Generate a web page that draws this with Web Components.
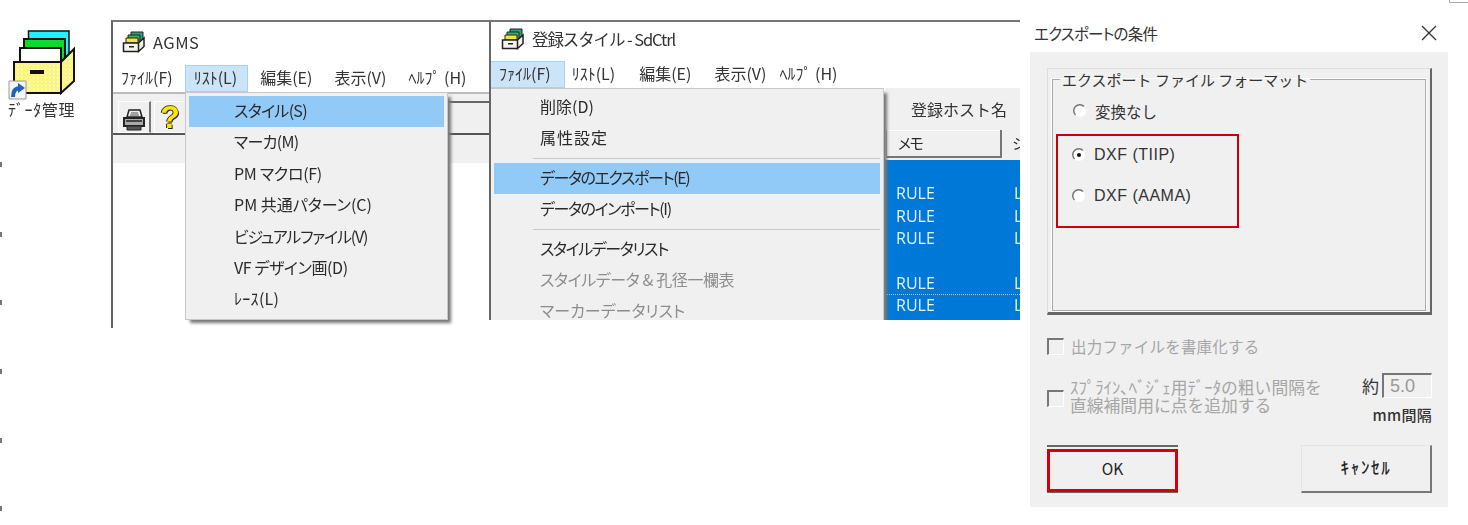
<!DOCTYPE html>
<html lang="ja">
<head>
<meta charset="utf-8">
<title>AGMS</title>
<style>
	html, body { margin: 0; background: #fff; }
	body { font-family: "Noto Sans CJK JP", "Noto Sans", sans-serif; color: #2a2a2a; overflow: hidden; }
</style>
</head>
<body>
<desk-top>
	<desktop-icon style="left:8px;top:28px">ﾃﾞｰﾀ管理</desktop-icon>

	<app-window title="AGMS" style="left:111px;top:20px;width:379px;height:308px;--pad:9px;--head:43px;--lift:4px;--track:.5px">
		<menu-item slot="menu" style="margin-left:-1px">ﾌｧｲﾙ(F)</menu-item>
		<menu-item slot="menu" open style="margin-left:-1px;padding-right:10px">ﾘｽﾄ(L)</menu-item>
		<menu-item slot="menu" style="margin-left:-1px">編集(E)</menu-item>
		<menu-item slot="menu">表示(V)</menu-item>
		<menu-item slot="menu">ﾍﾙﾌﾟ (H)</menu-item>
		<tool-bar>
			<tool-button><print-icon></print-icon></tool-button>
			<tool-button>?</tool-button>
		</tool-bar>
		<list-pane></list-pane>
		<drop-menu style="left:72px;top:70px;width:263px;height:228px;--inset:45px;--row:31.400px">
			<menu-entry active style="letter-spacing:-.7px">スタイル(S)</menu-entry>
			<menu-entry style="letter-spacing:-.7px">マーカ(M)</menu-entry>
			<menu-entry style="letter-spacing:-.3px">PM マクロ(F)</menu-entry>
			<menu-entry>PM 共通パターン(C)</menu-entry>
			<menu-entry style="letter-spacing:-1.200px">ビジュアルファイル(V)</menu-entry>
			<menu-entry style="letter-spacing:-.4px">VF デザイン画(D)</menu-entry>
			<menu-entry style="letter-spacing:.3px">ﾚｰｽ(L)</menu-entry>
		</drop-menu>
	</app-window>

	<app-window title="登録スタイル - SdCtrl" style="left:489px;top:20px;width:531px;height:300px;--pad:10px;--head:39px;--lift:6px;--track:-1.100px">
		<menu-item slot="menu" open style="margin-left:-1px;padding-right:13px">ﾌｧｲﾙ(F)</menu-item>
		<menu-item slot="menu" style="margin-left:-6px">ﾘｽﾄ(L)</menu-item>
		<menu-item slot="menu" style="margin-left:2px">編集(E)</menu-item>
		<menu-item slot="menu" style="margin-left:1px">表示(V)</menu-item>
		<menu-item slot="menu" style="margin-left:-9px">ﾍﾙﾌﾟ (H)</menu-item>
		<style-table></style-table>
		<drop-menu style="left:-1px;top:66px;width:394px;height:240px;--inset:46px;--row:31px" open-end>
			<menu-entry>削除(D)</menu-entry>
			<menu-entry style="letter-spacing:1px">属性設定</menu-entry>
			<menu-sep></menu-sep>
			<menu-entry active style="letter-spacing:-1.400px">データのエクスポート(E)</menu-entry>
			<menu-entry style="letter-spacing:-1.400px">データのインポート(I)</menu-entry>
			<menu-sep></menu-sep>
			<menu-entry style="letter-spacing:-1.400px">スタイルデータリスト</menu-entry>
			<menu-entry disabled style="letter-spacing:-.4px">スタイルデータ &amp; 孔径一欄表</menu-entry>
			<menu-entry disabled>マーカーデータリスト</menu-entry>
		</drop-menu>
	</app-window>

	<export-dialog style="left:1030px;top:20px"></export-dialog>

	<edge-tick style="left:0;top:162px"></edge-tick>
	<edge-tick style="left:0;top:232px"></edge-tick>
	<edge-tick style="left:0;top:300px"></edge-tick>
	<edge-tick style="left:0;top:369px"></edge-tick>
	<edge-tick style="left:0;top:438px"></edge-tick>
	<edge-tick style="left:0;top:506px"></edge-tick>
</desk-top>

<script>
// Общая часть: теневой корень из строки разметки
class ShadowBox extends HTMLElement {
	constructor(html) {
		super();
		this.attachShadow({ mode: 'open' });
		let t = document.createElement('template');
		t.innerHTML = html;
		this.shadowRoot.append(t.content.cloneNode(true));
	}
}

const CABINET = `
	<svg viewBox="0 0 24 22" width="24" height="22" style="display:block">
		<path d="M9 1h12v9H9z" fill="#2f9c80" stroke="#222"/>
		<path d="M6 4h12v8H6z" fill="#39b54a" stroke="#222"/>
		<path d="M4 7h12v5H4z" fill="#f2e24a" stroke="#222"/>
		<path d="M1.500 12h15v8.500h-15zM16.500 12l5.500-5v8.500l-5.500 5z" fill="#f4f4ee" stroke="#222" stroke-width="1.500"/>
		<path d="M7 15h5v1.500H7z" fill="#222"/>
	</svg>`;

customElements.define('desk-top', class extends ShadowBox {
	constructor() {
		super(`<style>
			:host { display: block; position: relative; width: 1468px; height: 525px; overflow: hidden; filter: blur(.35px); }
			.corner { position: absolute; left: 1449px; top: -2px; width: 30px; height: 3px; border: 1px solid #aaa; }
		</style><slot></slot><div class="corner"></div>`);
	}
});

customElements.define('edge-tick', class extends ShadowBox {
	constructor() {
		super(`<style>:host { position: absolute; width: 2px; height: 5px; background: #777; }</style>`);
	}
});

customElements.define('desktop-icon', class extends ShadowBox {
	constructor() {
		super(`<style>
			:host { position: absolute; display: flex; flex-direction: column; align-items: flex-start; width: 72px; font-size: 16px; line-height: 20px; color: #333; }
			svg { display: block; }
			.name { margin-top: -2px; white-space: nowrap; letter-spacing: .6px; }
		</style>
		<svg viewBox="8 28 70 73" width="70" height="73">
			<defs><pattern id="dots" width="4" height="4" patternUnits="userSpaceOnUse">
				<rect width="4" height="4" fill="#fbf582"/><rect x="1" y="1" width="1.300" height="1.300" fill="#fff"/>
			</pattern></defs>
			<path d="M28.500 31h40.500v24l-4 6H28.500z" fill="#22f2f8" stroke="#111" stroke-width="1.500"/>
			<path d="M24 39h41v23H24z" fill="#0ddb2a" stroke="#111" stroke-width="2"/>
			<path d="M20 48h41v15H20z" fill="#fff" stroke="#111" stroke-width="2"/>
			<path d="M61 62l13-13v32l-13 12z" fill="url(#dots)" stroke="#111" stroke-width="2"/>
			<path d="M14 62h47v31H14z" fill="url(#dots)" stroke="#111" stroke-width="2"/>
			<path d="M30 70h14v4H30z" fill="#111"/>
			<path d="M9 81h17v18H9z" fill="#f4f4f4" stroke="#999"/>
			<path d="M13 97c0-6 2-9 7-9" fill="none" stroke="#1e63b8" stroke-width="4"/>
			<path d="M18 83l7 5-7 5z" fill="#1e63b8"/>
		</svg>
		<div class="name"><slot></slot></div>`);
	}
});

customElements.define('app-window', class extends ShadowBox {
	constructor() {
		super(`<style>
			:host { position: absolute; display: block; box-sizing: border-box; border-top: 2px solid #777; border-left: 2px solid #666; background: #fff; overflow: hidden; font-size: 16px; }
			.title { display: flex; align-items: center; gap: 7px; box-sizing: border-box; padding: 0 0 var(--lift) var(--pad); height: var(--head); font-size: 16.500px; letter-spacing: var(--track); color: #333; white-space: nowrap; }
			.menu { display: flex; align-items: center; height: 27px; gap: 4px; }
		</style>
		<div class="title"><span id="ico"></span><span id="cap"></span></div>
		<div class="menu"><slot name="menu"></slot></div>
		<div><slot></slot></div>`);
	}
	connectedCallback() {
		this.shadowRoot.querySelector('#cap').textContent = this.getAttribute('title');
		this.shadowRoot.querySelector('#ico').innerHTML = CABINET;
		this.removeAttribute('title');
	}
});

customElements.define('menu-item', class extends ShadowBox {
	constructor() {
		super(`<style>
			:host { display: block; box-sizing: border-box; height: 27px; line-height: 23px; padding: 0 8px; white-space: nowrap; font-size: 16px; color: #333; border: 1px solid transparent; }
			:host([open]) { background: #cce4f7; border-color: #a8d2f2; }
		</style><slot></slot>`);
	}
});

customElements.define('tool-bar', class extends ShadowBox {
	constructor() {
		super(`<style>
			:host { display: flex; gap: 3px; box-sizing: border-box; height: 43px; padding: 7px 0 0 5px; border-top: 2px solid #bbb; border-bottom: 2px solid #555;
				background: linear-gradient(#666, #666) no-repeat 80px 7px / 100% 2px, #f0f0f0; }
		</style><slot></slot>`);
	}
});

customElements.define('tool-button', class extends ShadowBox {
	constructor() {
		super(`<style>
			:host { display: flex; align-items: center; justify-content: center; box-sizing: border-box; width: 33px; height: 32px; background: #f0f0f0; border: 1px solid #fff; border-right: 2px solid #777; font: 700 32px/1 "Liberation Sans", sans-serif; color: #ffe600; text-shadow: 1px 1px 0 #222, -1px 0 0 #222, 0 -1px 0 #555; }
		</style><slot></slot>`);
	}
});

customElements.define('print-icon', class extends ShadowBox {
	constructor() {
		super(`<style>:host { display: block; width: 24px; height: 24px; }</style>
		<svg viewBox="0 0 24 24" width="24" height="24">
			<path d="M7 2h11l2 7H5z" fill="#eee" stroke="#222" stroke-width="1.500"/>
			<path d="M2 10h20v8H2z" fill="#aaa" stroke="#222" stroke-width="2"/>
			<path d="M4 13h16" stroke="#444" stroke-width="2"/>
			<path d="M5 18h14v4H5z" fill="#555" stroke="#222"/>
			<path d="M9 5h7M8 7h9" stroke="#555"/>
		</svg>`);
	}
});

customElements.define('list-pane', class extends ShadowBox {
	constructor() {
		super(`<style>
			:host { display: block; height: 193px; background: linear-gradient(#f0f0f0 28px, #fff 28px); }
		</style>`);
	}
});

customElements.define('drop-menu', class extends ShadowBox {
	constructor() {
		super(`<style>
			:host { position: absolute; display: block; box-sizing: border-box; padding: 3px; background: #f0f0f0; border: 1px solid #c8c8c8; box-shadow: 4px 4px 3px -1px #777; overflow: hidden; font-size: 16px; }
			:host([open-end]) { border-bottom: 0; }
		</style><slot></slot>`);
	}
});

customElements.define('menu-entry', class extends ShadowBox {
	constructor() {
		super(`<style>
			:host { display: block; height: var(--row); line-height: calc(var(--row) - 2px); padding-left: var(--inset); white-space: nowrap; color: #2a2a2a; font-feature-settings: "palt"; }
			:host([active]) { background: #91c9f7; }
			:host([disabled]) { color: #8d8d8d; }
		</style><slot></slot>`);
	}
});

customElements.define('menu-sep', class extends ShadowBox {
	constructor() {
		super(`<style>
			:host { display: flex; align-items: center; height: 9px; margin-left: 39px; }
			i { display: block; flex: 1; height: 1px; background: #c8c8c8; }
		</style><i></i>`);
	}
});

customElements.define('style-table', class extends ShadowBox {
	constructor() {
		super(`<style>
			:host { display: block; margin-left: 394px; font-size: 16px; overflow: hidden; }
			.host { height: 40px; line-height: 42px; padding-left: 26px; background: #f0f0f0; color: #333; white-space: nowrap; }
			.head { display: grid; grid-template-columns: 116px 1fr; box-sizing: border-box; height: 32px; padding: 2px 0 3px 1px; line-height: 26px; background: #f0f0f0; font-size: 15px; letter-spacing: -3px; }
			.head span { padding-left: 10px; white-space: nowrap; }
			.head .memo { border-left: 1px solid #999; border-right: 2px solid #777; border-bottom: 2px solid #777; box-shadow: inset 0 1px 0 #fff; }
			.rows { height: 160px; background: #0078d7; color: #e6f2fc; font: 16px/22.400px "Open Sans", sans-serif; }
			.row { display: grid; grid-template-columns: 118px 1fr; box-sizing: border-box; height: 22.400px; padding-left: 11px; }
			.row.focus { border-top: 1px dotted #a9cde9; line-height: 21px; }
		</style>
		<div class="host">登録ホスト名</div>
		<div class="head"><span class="memo">メモ</span><span>シ</span></div>
		<div class="rows">
			<div class="row"></div>
			<div class="row"><span>RULE</span><span>L</span></div>
			<div class="row"><span>RULE</span><span>L</span></div>
			<div class="row"><span>RULE</span><span>L</span></div>
			<div class="row"></div>
			<div class="row"><span>RULE</span><span>L</span></div>
			<div class="row focus"><span>RULE</span><span>L</span></div>
		</div>`);
	}
});

customElements.define('radio-option', class extends ShadowBox {
	constructor() {
		super(`<style>
			:host { display: flex; align-items: center; gap: 8px; height: 38px; font-size: 15.500px; color: #333; white-space: nowrap; }
			:host([latin]) { font: 16px "Liberation Sans", sans-serif; letter-spacing: .5px; }
			svg { display: block; flex: none; }
			.dot { display: none; }
			:host([checked]) .dot { display: block; }
		</style>
		<svg viewBox="0 0 14 14" width="14" height="14">
			<circle cx="7" cy="7" r="6" fill="#fff"/>
			<path d="M11 2.500A6 6 0 0 0 2.500 11" fill="none" stroke="#777" stroke-width="1.500"/>
			<circle class="dot" cx="7" cy="7" r="2" fill="#111"/>
		</svg><span><slot></slot></span>`);
	}
});

customElements.define('check-box', class extends ShadowBox {
	constructor() {
		super(`<style>
			:host { display: block; box-sizing: border-box; flex: none; width: 17px; height: 17px; background: #f0f0f0; border-top: 2px solid #777; border-left: 2px solid #777; border-right: 1px solid #fff; border-bottom: 1px solid #fff; }
		</style>`);
	}
});

customElements.define('win-button', class extends ShadowBox {
	constructor() {
		super(`<style>
			:host { display: block; box-sizing: border-box; width: 131px; height: 48px; border: 1px solid #e4e4e4; border-right: 2px solid #777; border-bottom: 2px solid #777; font-size: 15.500px; color: #222; }
			:host([marked]) { border: 0; border-top: 2px solid #666; border-bottom: 1px solid #666; padding-top: 2px; }
			div { display: flex; align-items: center; justify-content: center; box-sizing: border-box; height: 100%; padding-bottom: 5px; }
			:host([marked]) div { border: 3px solid #d3000c; }
			:host([wide]) { font-size: 17px; font-weight: 500; letter-spacing: 1.700px; }
		</style><div><slot></slot></div>`);
	}
});

customElements.define('export-dialog', class extends ShadowBox {
	constructor() {
		super(`<style>
			:host { position: absolute; display: block; width: 418px; font-size: 15.500px; color: #333; }
			.title { display: flex; align-items: center; justify-content: space-between; box-sizing: border-box; height: 32px; padding: 0 11px 6px 4px; background: #fff; font-feature-settings: "palt"; letter-spacing: -.8px; }
			.body { display: flex; flex-direction: column; box-sizing: border-box; height: 455px; padding: 16px 16px 0 17px; background: #f0f0f0; }
			.group { flex: none; box-sizing: border-box; height: 247px; padding: 3px 4px 1px 4px; border: 1px solid #ddd; border-right: 2px solid #666; border-bottom: 3px solid #666; }
			fieldset { box-sizing: border-box; height: 100%; margin: 0; padding: 9px 0 0 3px; border: 1px solid #aaa; box-shadow: 0 0 0 1px #fff; }
			legend { margin-left: 4px; padding: 0 2px; line-height: 15px; font-size: 15px; white-space: pre; }
			.plain { padding-left: 17px; }
			.plain radio-option { height: 30px; }
			.mark { box-sizing: border-box; width: 183px; height: 94px; margin-top: 8px; padding-left: 14px; border: 2px solid #c8000a; }
			.mark radio-option + radio-option { margin-top: 3px; }
			.off { color: #a6a6a6; }
			.row1 { flex: none; display: flex; align-items: center; gap: 7px; margin-top: 23px; height: 17px; line-height: 13px; letter-spacing: .2px; }
			.row2 { flex: none; display: flex; margin-top: 18px; height: 54px; }
			.row2 .txt { display: flex; align-items: center; gap: 6px; flex: 1; height: 50px; }
			.small { position: relative; top: -2px; font-size: 16.800px; line-height: 18px; white-space: pre; }
			.side { display: flex; flex-direction: column; align-items: flex-end; font-size: 15px; }
			.val { display: flex; align-items: center; gap: 3px; font-size: 17px; }
			.input { box-sizing: border-box; width: 50px; height: 25px; line-height: 23px; padding-left: 6px; border-top: 2px solid #777; border-left: 2px solid #777; border-right: 1px solid #fff; border-bottom: 1px solid #fff; color: #999; font-family: "Liberation Sans", sans-serif; font-size: 18px; }
			.mm { margin-top: 7px; line-height: 20px; font-weight: 500; letter-spacing: .3px; }
			.btns { flex: none; display: flex; justify-content: space-between; margin-top: 18px; }
		</style>
		<div class="title"><span>エクスポートの条件</span>
			<svg viewBox="0 0 16 16" width="16" height="16"><path d="M1 1l14 14M15 1L1 15" stroke="#333" stroke-width="1.300" fill="none"/></svg>
		</div>
		<div class="body">
			<div class="group"><fieldset>
				<legend>エクスポート ファイル フォーマット</legend>
				<div class="plain"><radio-option>変換なし</radio-option></div>
				<div class="mark">
					<radio-option latin checked>DXF (TIIP)</radio-option>
					<radio-option latin>DXF (AAMA)</radio-option>
				</div>
			</fieldset></div>
			<div class="row1 off"><check-box></check-box><span>出力ファイルを書庫化する</span></div>
			<div class="row2">
				<div class="txt off"><check-box></check-box><span class="small">ｽﾌﾟﾗｲﾝ､ﾍﾞｼﾞｪ用ﾃﾞｰﾀの粗い間隔を
直線補間用に点を追加する</span></div>
				<div class="side">
					<div class="val"><span>約</span><div class="input">5.0</div></div>
					<div class="mm">mm間隔</div>
				</div>
			</div>
			<div class="btns"><win-button marked>OK</win-button><win-button wide>ｷｬﾝｾﾙ</win-button></div>
		</div>`);
	}
});
</script>
</body>
</html>
